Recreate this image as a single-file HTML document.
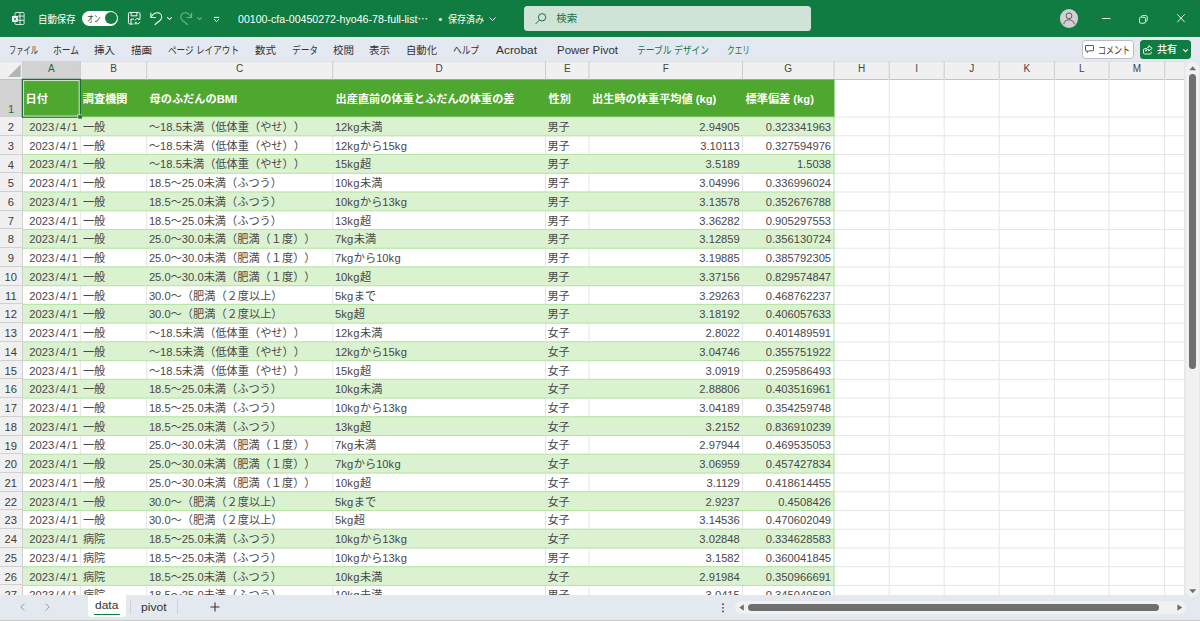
<!DOCTYPE html>
<html lang="ja"><head><meta charset="utf-8"><title>Excel</title>
<style>
*{box-sizing:border-box;margin:0;padding:0}
html,body{width:1200px;height:621px;overflow:hidden;background:#fff}
body{position:relative;text-spacing-trim:space-all;font-family:"Liberation Sans","Noto Sans CJK JP",sans-serif;font-size:11px;color:#444}
i{font-style:normal}
#title{position:absolute;left:0;top:0;width:1200px;height:37px;background:#107c41;color:#fff}
#title .t{position:absolute;white-space:nowrap;font-size:10.5px;line-height:14px;top:11.6px;color:#fff;transform-origin:0 50%}
#title svg{position:absolute;overflow:visible}
#toggle{position:absolute;left:81.7px;top:10.7px;width:36.5px;height:15.2px;border-radius:8px;background:#fff}
#toggle b{position:absolute;left:23.3px;top:1.6px;width:12px;height:12px;border-radius:50%;background:#107c41}
#toggle span{position:absolute;left:5px;top:1.1px;font-size:9.5px;line-height:14px;color:#1f4d33;font-weight:400;white-space:nowrap;transform-origin:0 50%}
#search{position:absolute;left:524px;top:6.2px;width:287px;height:24.8px;border-radius:3.5px;background:#cfe3d7}
#search span{position:absolute;left:32.2px;top:5.3px;font-size:10.5px;line-height:14px;color:#1f6e43}
#avatar{position:absolute;left:1059.5px;top:9.3px;width:18.8px;height:18.8px;border-radius:50%;background:#d2d0ce}
#ribbon{position:absolute;left:0;top:37px;width:1200px;height:24px;background:#e4e8f0}
#ribbon .tab{position:absolute;top:5.5px;font-size:10.5px;line-height:14px;color:#333;white-space:nowrap;transform-origin:0 50%}
#ribbon .tab.g{color:#107c41}
#btnc{position:absolute;left:1081.5px;top:3.4px;width:52px;height:18.2px;border:1px solid #b9bcc2;border-radius:3.5px;background:#fff}
#btns{position:absolute;left:1140px;top:3.4px;width:50.8px;height:18.2px;border-radius:3.5px;background:#107c41}
#btnc span,#btns span{position:absolute;top:1.4px;font-size:10.5px;line-height:14px;white-space:nowrap;transform-origin:0 50%}
#btnc span{left:15px;color:#3c3c3c}
#btns span{left:16.6px;top:1.7px;color:#fff;font-weight:500}
#ribbon svg{position:absolute;overflow:visible}
#colhdr{position:absolute;left:0;top:61px;width:1184px;height:19px;background:linear-gradient(#d9d9d9,#f0f0f0 1.5px);border-bottom:1px solid #c3c5c5}
#colhdr .ch{position:absolute;top:0;height:17.5px;line-height:15.4px;text-align:center;font-size:10px;color:#444}
#colhdr .ch.sel{color:#1e6b3c}
#sheet{position:absolute;left:0;top:0;width:1184px;height:595.3px;overflow:hidden}
.th{position:absolute;top:91px;font-weight:700;color:#fff;font-size:11.2px;line-height:16px;white-space:nowrap}
.tr{position:absolute;left:0;width:835px;height:18.735px}
.tr .c{position:absolute;top:.9px;line-height:19.4px;white-space:nowrap;color:#484848;font-size:11.2px}
.tr .c.r{text-align:right}
#rowhdr{position:absolute;left:0;top:80px;width:22.6px;height:515.3px;background:#f0f0f0;overflow:hidden;border-right:1px solid #d0d0d0}
#rowhdr .rh{position:absolute;left:0;width:21.6px;text-align:center;font-size:11.2px;color:#3c3c3c;border-bottom:1px solid #d0d0d0;margin-top:-80px}
#rowhdr .rh.sel{background:#d2d2d2;color:#1e6b3c;width:22px}
#vscroll{position:absolute;left:1184px;top:61px;width:16px;height:537px;background:#e4e8ef}
#vtrack{position:absolute;left:1.5px;top:.8px;width:13px;height:535.4px;background:#f1f1f1;border-radius:6.5px}
#vthumb{position:absolute;left:5px;top:13px;width:7px;height:294.5px;border-radius:3.5px;background:#6f6f6f}
#bottom{position:absolute;left:0;top:595.3px;width:1200px;height:25.7px;background:#e4e8ef;border-bottom:1.3px solid #c9c9c9}
#bottom svg{position:absolute;overflow:visible}
#tabdata{position:absolute;left:88px;top:0;width:38px;height:22px;background:#fff;border-radius:0 0 4px 4px}
#tabdata span{position:absolute;left:6.5px;top:2.2px;font-size:11.5px;line-height:16px;color:#333}
#tabdata i{position:absolute;left:6px;top:18.3px;width:26px;height:1.5px;background:#107c41}
#tabpivot{position:absolute;left:140.5px;top:3.5px;font-size:11.5px;line-height:16px;color:#333}
.sep{position:absolute;top:4px;width:1px;height:15px;background:#cfd3d9}
#htrack{position:absolute;left:735px;top:5.7px;width:450.5px;height:13px;border-radius:6.5px;background:#f1f1f1}
#hthumb{position:absolute;left:748px;top:8.7px;width:411px;height:7px;border-radius:3.5px;background:#6f6f6f}
.tr .c .sl{padding:0 1.2px}
#grid{position:absolute;left:0;top:0}
.tr .c .kg{letter-spacing:.4px}
#selsvg{position:absolute;left:0;top:0}

</style></head>
<body>
<div id="title">
<svg style="left:12px;top:12px" width="13" height="13" viewBox="0 0 13 13" fill="none" stroke="#fff" stroke-width=".8"><path d="M3 4V1.500c0-.6.400-1 1-1h7.100c.6 0 1 .400 1 1v10c0 .6-.4 1-1 1H4c-.6 0-1-.4-1-1V10"/><path d="M8 .5v12M5.800 4.100h6.300M5.800 8.300h6.300"/><rect x="0" y="4.100" width="5.900" height="5.900" rx=".9" fill="#fff" stroke="none"/><path d="M1.800 5.600l2.300 2.900M4.100 5.600L1.800 8.500" stroke="#107c41" stroke-width=".85"/></svg>
<span class="t" style="transform:scaleX(0.893);left:38px">自動保存</span>
<div id="toggle"><span style="transform:scaleX(0.710)">オン</span><b></b></div>
<svg style="left:128px;top:12px" width="12.500" height="12.500" viewBox="0 0 14 14" fill="none" stroke="#fff" stroke-width="1.100"><path d="M6 13.500H2c-.8 0-1.500-.7-1.500-1.500V2C.5 1.200 1.200.5 2 .5h10c.8 0 1.500.7 1.500 1.500v4.500"/><path d="M3.500.5v3.800h6.500V.5M3.300 13.300V8h3.500"/><path d="M8 9.500a3 3 0 0 1 5.200-1.200M13.300 6.400v2h-2M13.400 11a3 3 0 0 1-5.200 1.200M8 14v-2h2" stroke-width="1"/></svg>
<svg style="left:150px;top:11px" width="13" height="15" viewBox="0 0 13 15" fill="none" stroke="#fff" stroke-width="1.100"><path d="M.9 1.700V6.500H5.800"/><path d="M1.200 6.300C2.500 3.600 5 1.800 7.500 1.800c2.500 0 4.200 2 4.200 4.200 0 1.500-.7 2.600-1.700 3.500L4.700 13.700"/></svg>
<svg style="left:167.200px;top:16.800px" width="5" height="3.200" viewBox="0 0 5 3.200" fill="none" stroke="#fff" stroke-width="1.100"><path d="M.3.400L2.500 2.600 4.700.4"/></svg>
<svg style="left:180px;top:11px;opacity:.4" width="13" height="15" viewBox="0 0 13 15" fill="none" stroke="#fff" stroke-width="1.100"><path d="M11.600 1.700V6.500H6.700"/><path d="M11.300 6.300C10 3.600 7.500 1.800 5 1.800 2.500 1.800.8 3.800.8 6c0 1.500.7 2.600 1.700 3.500l5.300 4.200"/></svg>
<svg style="left:197px;top:16.800px;opacity:.4" width="5" height="3.200" viewBox="0 0 5 3.200" fill="none" stroke="#fff" stroke-width="1.100"><path d="M.3.400L2.500 2.600 4.700.4"/></svg>
<svg style="left:212.500px;top:15.500px" width="7" height="6" viewBox="0 0 7 6" fill="none" stroke="#fff" stroke-width="1"><path d="M.8 1.400h5.400M1 3.200l2.500 2.400L6 3.200"/></svg>
<span class="t" style="transform:scaleX(1.011);left:238px">00100-cfa-00450272-hyo46-78-full-list<i style="font-family:'Noto Sans CJK JP',sans-serif">…</i></span>
<span class="t" style="left:438.500px">•</span><span class="t" style="transform:scaleX(0.857);left:447.500px">保存済み</span>
<svg style="left:488.500px;top:16.500px" width="7" height="4.500" viewBox="0 0 7 4.500" fill="none" stroke="#fff" stroke-width="1"><path d="M.5.500l3 3 3-3"/></svg>
<div id="search"><svg style="left:10.500px;top:6.500px" width="12" height="12" viewBox="0 0 12 12" fill="none" stroke="#1f6e43" stroke-width="1"><circle cx="7.100" cy="4.300" r="3.700"/><path d="M4.500 7L.6 11"/></svg><span>検索</span></div>
<div id="avatar"><svg style="left:3.400px;top:3px" width="12" height="13" viewBox="0 0 12 13" fill="none" stroke="#605e5c" stroke-width="1"><circle cx="6" cy="3.800" r="2.900"/><path d="M.8 12.300C1 9.300 3 7.800 6 7.800s5 1.500 5.200 4.500"/></svg></div>
<svg style="left:1101.700px;top:17.800px" width="8.500" height="1.200" viewBox="0 0 8.500 1.200"><rect width="8.500" height=".9" fill="#fff"/></svg>
<svg style="left:1139px;top:14.500px" width="8.700" height="8.700" viewBox="0 0 9 9" fill="none" stroke="#fff" stroke-width=".9"><rect x=".5" y="2.300" width="6.200" height="6.200" rx="1.400"/><path d="M2.500 2V1.700C2.500 1 3 .5 3.700.5H7c.8 0 1.500.7 1.500 1.500v3.300c0 .7-.5 1.200-1.200 1.200H7"/></svg>
<svg style="left:1176.800px;top:14.300px" width="8" height="8.500" viewBox="0 0 8 8.500" fill="none" stroke="#fff" stroke-width=".9"><path d="M.3.300l7.400 7.900M7.700.3L.3 8.200"/></svg>
</div>
<div id="ribbon">
<span class="tab" style="transform:scaleX(0.690);left:9px">ファイル</span>
<span class="tab" style="transform:scaleX(0.834);left:53px">ホーム</span>
<span class="tab" style="transform:scaleX(1.000);left:94px">挿入</span>
<span class="tab" style="transform:scaleX(1.000);left:131px">描画</span>
<span class="tab" style="transform:scaleX(0.819);left:168px">ページ レイアウト</span>
<span class="tab" style="transform:scaleX(1.000);left:255px">数式</span>
<span class="tab" style="transform:scaleX(0.825);left:292px">データ</span>
<span class="tab" style="transform:scaleX(1.000);left:333px">校閲</span>
<span class="tab" style="transform:scaleX(1.000);left:369px">表示</span>
<span class="tab" style="transform:scaleX(0.984);left:406px">自動化</span>
<span class="tab" style="transform:scaleX(0.825);left:453px">ヘルプ</span>
<span class="tab" style="transform:scaleX(1.133);left:496px">Acrobat</span>
<span class="tab" style="transform:scaleX(1.089);left:557px">Power Pivot</span>
<span class="tab g" style="transform:scaleX(0.834);left:637px">テーブル デザイン</span>
<span class="tab g" style="transform:scaleX(0.730);left:726.500px">クエリ</span>
<div id="btnc"><svg style="left:2.500px;top:3.700px" width="9" height="8.500" viewBox="0 0 9 8.500" fill="none" stroke="#444" stroke-width=".9"><path d="M1 .5h7c.3 0 .5.200.5.500v4.300c0 .3-.2.500-.5.500H3.800L2.200 7.600V5.800H1c-.3 0-.5-.2-.5-.5V1C.5.700.7.500 1 .500z"/></svg><span style="transform:scaleX(0.762)">コメント</span></div>
<div id="btns"><svg style="left:3px;top:4.300px" width="10" height="9.500" viewBox="0 0 10 9.500" fill="none" stroke="#fff" stroke-width=".9"><path d="M3.300 3.600H1.600C1 3.600.5 4.100.5 4.700v3.200C.5 8.500 1 9 1.600 9h5.600c.6 0 1.100-.5 1.100-1.100V6.800"/><path d="M5.800.6l3.400 2.700-3.400 2.600V4.400C4.300 4.400 3.300 5 2.600 6.200 2.800 3.800 4 2.400 5.800 2.200z"/></svg><span style="transform:scaleX(0.952)">共有</span><svg style="left:42.800px;top:8.400px" width="5" height="3.500" viewBox="0 0 5 3.500" fill="none" stroke="#fff" stroke-width="1.100"><path d="M.3.400l2.200 2.300L4.700.4"/></svg></div>
</div>
<div id="colhdr">
<svg width="1184" height="18.500" viewBox="0 0 1184 18.500" style="position:absolute;left:0;top:0"><path d="M20.700 3.500v12.400H8z" fill="#b5b5b5"/><rect x="21.8" y="0" width="58.9" height="18.500" fill="#d2d2d2"/><path d="M80.4 .5V18.500M146.7 .5V18.500M332.75 .5V18.500M545.5 .5V18.500M589.0 .5V18.500M742.5 .5V18.500M834.0 .5V18.500M889.2 .5V18.500M944.2 .5V18.500M999.2 .5V18.500M1054.4 .5V18.500M1109.1 .5V18.500M1164.7 .5V18.500" stroke="#cdcdcd" stroke-width="1" fill="none"/></svg>
<div class="ch sel" style="left:22.30px;width:58.10px">A</div><div class="ch" style="left:80.40px;width:66.30px">B</div><div class="ch" style="left:146.70px;width:186.05px">C</div><div class="ch" style="left:332.75px;width:212.75px">D</div><div class="ch" style="left:545.50px;width:43.50px">E</div><div class="ch" style="left:589.00px;width:153.50px">F</div><div class="ch" style="left:742.50px;width:91.50px">G</div><div class="ch" style="left:834.00px;width:55.20px">H</div><div class="ch" style="left:889.20px;width:55.00px">I</div><div class="ch" style="left:944.20px;width:55.00px">J</div><div class="ch" style="left:999.20px;width:55.20px">K</div><div class="ch" style="left:1054.40px;width:54.70px">L</div><div class="ch" style="left:1109.10px;width:55.60px">M</div>
</div>
<div id="sheet">
<svg id="grid" width="1184" height="596" viewBox="0 0 1184 596"><path d="M80.4 79V596M146.7 79V596M332.75 79V596M545.5 79V596M589.0 79V596M742.5 79V596M889.2 79V596M944.2 79V596M999.2 79V596M1054.4 79V596M1109.1 79V596M1164.7 79V596M22 117.05H1184M22 135.78H1184M22 154.52H1184M22 173.25H1184M22 191.99H1184M22 210.72H1184M22 229.46H1184M22 248.19H1184M22 266.93H1184M22 285.67H1184M22 304.40H1184M22 323.13H1184M22 341.87H1184M22 360.61H1184M22 379.34H1184M22 398.07H1184M22 416.81H1184M22 435.55H1184M22 454.28H1184M22 473.01H1184M22 491.75H1184M22 510.49H1184M22 529.22H1184M22 547.95H1184M22 566.69H1184M22 585.42H1184" stroke="#e6e6e6" stroke-width="1" fill="none"/><rect x="22.5" y="79.5" width="812.0" height="37.85" fill="#4ea72e"/><path d="M22.5 117.05h812.0v18.735h-812.0zM22.5 154.52h812.0v18.735h-812.0zM22.5 191.99h812.0v18.735h-812.0zM22.5 229.46h812.0v18.735h-812.0zM22.5 266.93h812.0v18.735h-812.0zM22.5 304.40h812.0v18.735h-812.0zM22.5 341.87h812.0v18.735h-812.0zM22.5 379.34h812.0v18.735h-812.0zM22.5 416.81h812.0v18.735h-812.0zM22.5 454.28h812.0v18.735h-812.0zM22.5 491.75h812.0v18.735h-812.0zM22.5 529.22h812.0v18.735h-812.0zM22.5 566.69h812.0v18.735h-812.0z" fill="#daf2d0"/><path d="M22.5 117.05H834.5M22.5 135.78H834.5M22.5 154.52H834.5M22.5 173.25H834.5M22.5 191.99H834.5M22.5 210.72H834.5M22.5 229.46H834.5M22.5 248.19H834.5M22.5 266.93H834.5M22.5 285.67H834.5M22.5 304.40H834.5M22.5 323.13H834.5M22.5 341.87H834.5M22.5 360.61H834.5M22.5 379.34H834.5M22.5 398.07H834.5M22.5 416.81H834.5M22.5 435.55H834.5M22.5 454.28H834.5M22.5 473.01H834.5M22.5 491.75H834.5M22.5 510.49H834.5M22.5 529.22H834.5M22.5 547.95H834.5M22.5 566.69H834.5M22.5 585.42H834.5M22.5 604.16H834.5M834.0 117.05V596" stroke="#b6e5a3" stroke-width="1" fill="none"/></svg>
<span class="th" style="left:25.6px">日付</span><span class="th" style="left:82.8px">調査機関</span><span class="th" style="left:149.5px">母のふだんのBMI</span><span class="th" style="left:335.5px">出産直前の体重とふだんの体重の差</span><span class="th" style="left:548.5px">性別</span><span class="th" style="left:592.0px">出生時の体重平均値 (kg)</span><span class="th" style="left:745.5px">標準偏差 (kg)</span>
<div class="tr" style="top:117.05px"><span class="c r" style="left:22.3px;width:55.400000000000006px">2023<i class="sl">/</i>4<i class="sl">/</i>1</span><span class="c" style="left:82.9px">一般</span><span class="c" style="left:148.9px">～18.5未満（低体重（やせ））</span><span class="c" style="left:334.9px">12<i class="kg">kg</i>未満</span><span class="c" style="left:547.4px">男子</span><span class="c r" style="left:589.5px;width:150.3px">2.94905</span><span class="c r" style="left:743px;width:88.1px">0.323341963</span></div>
<div class="tr" style="top:135.78px"><span class="c r" style="left:22.3px;width:55.400000000000006px">2023<i class="sl">/</i>4<i class="sl">/</i>1</span><span class="c" style="left:82.9px">一般</span><span class="c" style="left:148.9px">～18.5未満（低体重（やせ））</span><span class="c" style="left:334.9px">12<i class="kg">kg</i>から15<i class="kg">kg</i></span><span class="c" style="left:547.4px">男子</span><span class="c r" style="left:589.5px;width:150.3px">3.10113</span><span class="c r" style="left:743px;width:88.1px">0.327594976</span></div>
<div class="tr" style="top:154.52px"><span class="c r" style="left:22.3px;width:55.400000000000006px">2023<i class="sl">/</i>4<i class="sl">/</i>1</span><span class="c" style="left:82.9px">一般</span><span class="c" style="left:148.9px">～18.5未満（低体重（やせ））</span><span class="c" style="left:334.9px">15<i class="kg">kg</i>超</span><span class="c" style="left:547.4px">男子</span><span class="c r" style="left:589.5px;width:150.3px">3.5189</span><span class="c r" style="left:743px;width:88.1px">1.5038</span></div>
<div class="tr" style="top:173.25px"><span class="c r" style="left:22.3px;width:55.400000000000006px">2023<i class="sl">/</i>4<i class="sl">/</i>1</span><span class="c" style="left:82.9px">一般</span><span class="c" style="left:148.9px">18.5～25.0未満（ふつう）</span><span class="c" style="left:334.9px">10<i class="kg">kg</i>未満</span><span class="c" style="left:547.4px">男子</span><span class="c r" style="left:589.5px;width:150.3px">3.04996</span><span class="c r" style="left:743px;width:88.1px">0.336996024</span></div>
<div class="tr" style="top:191.99px"><span class="c r" style="left:22.3px;width:55.400000000000006px">2023<i class="sl">/</i>4<i class="sl">/</i>1</span><span class="c" style="left:82.9px">一般</span><span class="c" style="left:148.9px">18.5～25.0未満（ふつう）</span><span class="c" style="left:334.9px">10<i class="kg">kg</i>から13<i class="kg">kg</i></span><span class="c" style="left:547.4px">男子</span><span class="c r" style="left:589.5px;width:150.3px">3.13578</span><span class="c r" style="left:743px;width:88.1px">0.352676788</span></div>
<div class="tr" style="top:210.72px"><span class="c r" style="left:22.3px;width:55.400000000000006px">2023<i class="sl">/</i>4<i class="sl">/</i>1</span><span class="c" style="left:82.9px">一般</span><span class="c" style="left:148.9px">18.5～25.0未満（ふつう）</span><span class="c" style="left:334.9px">13<i class="kg">kg</i>超</span><span class="c" style="left:547.4px">男子</span><span class="c r" style="left:589.5px;width:150.3px">3.36282</span><span class="c r" style="left:743px;width:88.1px">0.905297553</span></div>
<div class="tr" style="top:229.46px"><span class="c r" style="left:22.3px;width:55.400000000000006px">2023<i class="sl">/</i>4<i class="sl">/</i>1</span><span class="c" style="left:82.9px">一般</span><span class="c" style="left:148.9px">25.0～30.0未満（肥満（１度））</span><span class="c" style="left:334.9px">7<i class="kg">kg</i>未満</span><span class="c" style="left:547.4px">男子</span><span class="c r" style="left:589.5px;width:150.3px">3.12859</span><span class="c r" style="left:743px;width:88.1px">0.356130724</span></div>
<div class="tr" style="top:248.19px"><span class="c r" style="left:22.3px;width:55.400000000000006px">2023<i class="sl">/</i>4<i class="sl">/</i>1</span><span class="c" style="left:82.9px">一般</span><span class="c" style="left:148.9px">25.0～30.0未満（肥満（１度））</span><span class="c" style="left:334.9px">7<i class="kg">kg</i>から10<i class="kg">kg</i></span><span class="c" style="left:547.4px">男子</span><span class="c r" style="left:589.5px;width:150.3px">3.19885</span><span class="c r" style="left:743px;width:88.1px">0.385792305</span></div>
<div class="tr" style="top:266.93px"><span class="c r" style="left:22.3px;width:55.400000000000006px">2023<i class="sl">/</i>4<i class="sl">/</i>1</span><span class="c" style="left:82.9px">一般</span><span class="c" style="left:148.9px">25.0～30.0未満（肥満（１度））</span><span class="c" style="left:334.9px">10<i class="kg">kg</i>超</span><span class="c" style="left:547.4px">男子</span><span class="c r" style="left:589.5px;width:150.3px">3.37156</span><span class="c r" style="left:743px;width:88.1px">0.829574847</span></div>
<div class="tr" style="top:285.67px"><span class="c r" style="left:22.3px;width:55.400000000000006px">2023<i class="sl">/</i>4<i class="sl">/</i>1</span><span class="c" style="left:82.9px">一般</span><span class="c" style="left:148.9px">30.0～（肥満（２度以上）</span><span class="c" style="left:334.9px">5<i class="kg">kg</i>まで</span><span class="c" style="left:547.4px">男子</span><span class="c r" style="left:589.5px;width:150.3px">3.29263</span><span class="c r" style="left:743px;width:88.1px">0.468762237</span></div>
<div class="tr" style="top:304.40px"><span class="c r" style="left:22.3px;width:55.400000000000006px">2023<i class="sl">/</i>4<i class="sl">/</i>1</span><span class="c" style="left:82.9px">一般</span><span class="c" style="left:148.9px">30.0～（肥満（２度以上）</span><span class="c" style="left:334.9px">5<i class="kg">kg</i>超</span><span class="c" style="left:547.4px">男子</span><span class="c r" style="left:589.5px;width:150.3px">3.18192</span><span class="c r" style="left:743px;width:88.1px">0.406057633</span></div>
<div class="tr" style="top:323.13px"><span class="c r" style="left:22.3px;width:55.400000000000006px">2023<i class="sl">/</i>4<i class="sl">/</i>1</span><span class="c" style="left:82.9px">一般</span><span class="c" style="left:148.9px">～18.5未満（低体重（やせ））</span><span class="c" style="left:334.9px">12<i class="kg">kg</i>未満</span><span class="c" style="left:547.4px">女子</span><span class="c r" style="left:589.5px;width:150.3px">2.8022</span><span class="c r" style="left:743px;width:88.1px">0.401489591</span></div>
<div class="tr" style="top:341.87px"><span class="c r" style="left:22.3px;width:55.400000000000006px">2023<i class="sl">/</i>4<i class="sl">/</i>1</span><span class="c" style="left:82.9px">一般</span><span class="c" style="left:148.9px">～18.5未満（低体重（やせ））</span><span class="c" style="left:334.9px">12<i class="kg">kg</i>から15<i class="kg">kg</i></span><span class="c" style="left:547.4px">女子</span><span class="c r" style="left:589.5px;width:150.3px">3.04746</span><span class="c r" style="left:743px;width:88.1px">0.355751922</span></div>
<div class="tr" style="top:360.61px"><span class="c r" style="left:22.3px;width:55.400000000000006px">2023<i class="sl">/</i>4<i class="sl">/</i>1</span><span class="c" style="left:82.9px">一般</span><span class="c" style="left:148.9px">～18.5未満（低体重（やせ））</span><span class="c" style="left:334.9px">15<i class="kg">kg</i>超</span><span class="c" style="left:547.4px">女子</span><span class="c r" style="left:589.5px;width:150.3px">3.0919</span><span class="c r" style="left:743px;width:88.1px">0.259586493</span></div>
<div class="tr" style="top:379.34px"><span class="c r" style="left:22.3px;width:55.400000000000006px">2023<i class="sl">/</i>4<i class="sl">/</i>1</span><span class="c" style="left:82.9px">一般</span><span class="c" style="left:148.9px">18.5～25.0未満（ふつう）</span><span class="c" style="left:334.9px">10<i class="kg">kg</i>未満</span><span class="c" style="left:547.4px">女子</span><span class="c r" style="left:589.5px;width:150.3px">2.88806</span><span class="c r" style="left:743px;width:88.1px">0.403516961</span></div>
<div class="tr" style="top:398.07px"><span class="c r" style="left:22.3px;width:55.400000000000006px">2023<i class="sl">/</i>4<i class="sl">/</i>1</span><span class="c" style="left:82.9px">一般</span><span class="c" style="left:148.9px">18.5～25.0未満（ふつう）</span><span class="c" style="left:334.9px">10<i class="kg">kg</i>から13<i class="kg">kg</i></span><span class="c" style="left:547.4px">女子</span><span class="c r" style="left:589.5px;width:150.3px">3.04189</span><span class="c r" style="left:743px;width:88.1px">0.354259748</span></div>
<div class="tr" style="top:416.81px"><span class="c r" style="left:22.3px;width:55.400000000000006px">2023<i class="sl">/</i>4<i class="sl">/</i>1</span><span class="c" style="left:82.9px">一般</span><span class="c" style="left:148.9px">18.5～25.0未満（ふつう）</span><span class="c" style="left:334.9px">13<i class="kg">kg</i>超</span><span class="c" style="left:547.4px">女子</span><span class="c r" style="left:589.5px;width:150.3px">3.2152</span><span class="c r" style="left:743px;width:88.1px">0.836910239</span></div>
<div class="tr" style="top:435.55px"><span class="c r" style="left:22.3px;width:55.400000000000006px">2023<i class="sl">/</i>4<i class="sl">/</i>1</span><span class="c" style="left:82.9px">一般</span><span class="c" style="left:148.9px">25.0～30.0未満（肥満（１度））</span><span class="c" style="left:334.9px">7<i class="kg">kg</i>未満</span><span class="c" style="left:547.4px">女子</span><span class="c r" style="left:589.5px;width:150.3px">2.97944</span><span class="c r" style="left:743px;width:88.1px">0.469535053</span></div>
<div class="tr" style="top:454.28px"><span class="c r" style="left:22.3px;width:55.400000000000006px">2023<i class="sl">/</i>4<i class="sl">/</i>1</span><span class="c" style="left:82.9px">一般</span><span class="c" style="left:148.9px">25.0～30.0未満（肥満（１度））</span><span class="c" style="left:334.9px">7<i class="kg">kg</i>から10<i class="kg">kg</i></span><span class="c" style="left:547.4px">女子</span><span class="c r" style="left:589.5px;width:150.3px">3.06959</span><span class="c r" style="left:743px;width:88.1px">0.457427834</span></div>
<div class="tr" style="top:473.01px"><span class="c r" style="left:22.3px;width:55.400000000000006px">2023<i class="sl">/</i>4<i class="sl">/</i>1</span><span class="c" style="left:82.9px">一般</span><span class="c" style="left:148.9px">25.0～30.0未満（肥満（１度））</span><span class="c" style="left:334.9px">10<i class="kg">kg</i>超</span><span class="c" style="left:547.4px">女子</span><span class="c r" style="left:589.5px;width:150.3px">3.1129</span><span class="c r" style="left:743px;width:88.1px">0.418614455</span></div>
<div class="tr" style="top:491.75px"><span class="c r" style="left:22.3px;width:55.400000000000006px">2023<i class="sl">/</i>4<i class="sl">/</i>1</span><span class="c" style="left:82.9px">一般</span><span class="c" style="left:148.9px">30.0～（肥満（２度以上）</span><span class="c" style="left:334.9px">5<i class="kg">kg</i>まで</span><span class="c" style="left:547.4px">女子</span><span class="c r" style="left:589.5px;width:150.3px">2.9237</span><span class="c r" style="left:743px;width:88.1px">0.4508426</span></div>
<div class="tr" style="top:510.49px"><span class="c r" style="left:22.3px;width:55.400000000000006px">2023<i class="sl">/</i>4<i class="sl">/</i>1</span><span class="c" style="left:82.9px">一般</span><span class="c" style="left:148.9px">30.0～（肥満（２度以上）</span><span class="c" style="left:334.9px">5<i class="kg">kg</i>超</span><span class="c" style="left:547.4px">女子</span><span class="c r" style="left:589.5px;width:150.3px">3.14536</span><span class="c r" style="left:743px;width:88.1px">0.470602049</span></div>
<div class="tr" style="top:529.22px"><span class="c r" style="left:22.3px;width:55.400000000000006px">2023<i class="sl">/</i>4<i class="sl">/</i>1</span><span class="c" style="left:82.9px">病院</span><span class="c" style="left:148.9px">18.5～25.0未満（ふつう）</span><span class="c" style="left:334.9px">10<i class="kg">kg</i>から13<i class="kg">kg</i></span><span class="c" style="left:547.4px">女子</span><span class="c r" style="left:589.5px;width:150.3px">3.02848</span><span class="c r" style="left:743px;width:88.1px">0.334628583</span></div>
<div class="tr" style="top:547.95px"><span class="c r" style="left:22.3px;width:55.400000000000006px">2023<i class="sl">/</i>4<i class="sl">/</i>1</span><span class="c" style="left:82.9px">病院</span><span class="c" style="left:148.9px">18.5～25.0未満（ふつう）</span><span class="c" style="left:334.9px">10<i class="kg">kg</i>から13<i class="kg">kg</i></span><span class="c" style="left:547.4px">男子</span><span class="c r" style="left:589.5px;width:150.3px">3.1582</span><span class="c r" style="left:743px;width:88.1px">0.360041845</span></div>
<div class="tr" style="top:566.69px"><span class="c r" style="left:22.3px;width:55.400000000000006px">2023<i class="sl">/</i>4<i class="sl">/</i>1</span><span class="c" style="left:82.9px">病院</span><span class="c" style="left:148.9px">18.5～25.0未満（ふつう）</span><span class="c" style="left:334.9px">10<i class="kg">kg</i>未満</span><span class="c" style="left:547.4px">女子</span><span class="c r" style="left:589.5px;width:150.3px">2.91984</span><span class="c r" style="left:743px;width:88.1px">0.350966691</span></div>
<div class="tr" style="top:585.42px"><span class="c r" style="left:22.3px;width:55.400000000000006px">2023<i class="sl">/</i>4<i class="sl">/</i>1</span><span class="c" style="left:82.9px">病院</span><span class="c" style="left:148.9px">18.5～25.0未満（ふつう）</span><span class="c" style="left:334.9px">10<i class="kg">kg</i>未満</span><span class="c" style="left:547.4px">男子</span><span class="c r" style="left:589.5px;width:150.3px">3.0415</span><span class="c r" style="left:743px;width:88.1px">0.345049589</span></div>
</div>
<div id="rowhdr">
<div class="rh sel" style="top:80px;height:37.05px"><span style="position:absolute;bottom:1px;left:0;right:0">1</span></div>
<div class="rh" style="top:117.05px;height:18.735px;line-height:21.13px">2</div><div class="rh" style="top:135.78px;height:18.735px;line-height:21.13px">3</div><div class="rh" style="top:154.52px;height:18.735px;line-height:21.13px">4</div><div class="rh" style="top:173.25px;height:18.735px;line-height:21.13px">5</div><div class="rh" style="top:191.99px;height:18.735px;line-height:21.13px">6</div><div class="rh" style="top:210.72px;height:18.735px;line-height:21.13px">7</div><div class="rh" style="top:229.46px;height:18.735px;line-height:21.13px">8</div><div class="rh" style="top:248.19px;height:18.735px;line-height:21.13px">9</div><div class="rh" style="top:266.93px;height:18.735px;line-height:21.13px">10</div><div class="rh" style="top:285.67px;height:18.735px;line-height:21.13px">11</div><div class="rh" style="top:304.40px;height:18.735px;line-height:21.13px">12</div><div class="rh" style="top:323.13px;height:18.735px;line-height:21.13px">13</div><div class="rh" style="top:341.87px;height:18.735px;line-height:21.13px">14</div><div class="rh" style="top:360.61px;height:18.735px;line-height:21.13px">15</div><div class="rh" style="top:379.34px;height:18.735px;line-height:21.13px">16</div><div class="rh" style="top:398.07px;height:18.735px;line-height:21.13px">17</div><div class="rh" style="top:416.81px;height:18.735px;line-height:21.13px">18</div><div class="rh" style="top:435.55px;height:18.735px;line-height:21.13px">19</div><div class="rh" style="top:454.28px;height:18.735px;line-height:21.13px">20</div><div class="rh" style="top:473.01px;height:18.735px;line-height:21.13px">21</div><div class="rh" style="top:491.75px;height:18.735px;line-height:21.13px">22</div><div class="rh" style="top:510.49px;height:18.735px;line-height:21.13px">23</div><div class="rh" style="top:529.22px;height:18.735px;line-height:21.13px">24</div><div class="rh" style="top:547.95px;height:18.735px;line-height:21.13px">25</div><div class="rh" style="top:566.69px;height:18.735px;line-height:21.13px">26</div><div class="rh" style="top:585.42px;height:18.735px;line-height:21.13px">27</div>
</div>
<svg id="selsvg" width="90" height="125" viewBox="0 0 90 125"><rect x="22.4" y="79.4" width="57.95" height="37.75" fill="none" stroke="#1e6b3c" stroke-width="1.3"/><rect x="23.55" y="80.55" width="55.65" height="35.45" fill="none" stroke="#fff" stroke-opacity=".72" stroke-width="1"/><rect x="77.500" y="114.500" width="4.400" height="4.100" fill="#e3f4dc"/><rect x="78.200" y="115.200" width="3.700" height="3.400" fill="#1e6b3c"/></svg>
<div id="bottom">
<svg style="left:19.500px;top:7.500px" width="5" height="8" viewBox="0 0 5 8" fill="none" stroke="#9a9a9a" stroke-width="1"><path d="M4.300.5L.8 4l3.500 3.500"/></svg>
<svg style="left:44.500px;top:7.500px" width="5" height="8" viewBox="0 0 5 8" fill="none" stroke="#9a9a9a" stroke-width="1"><path d="M.7.500L4.200 4 .7 7.500"/></svg>
<div id="tabdata"><span style="transform:scaleX(1.041);transform-origin:0 50%">data</span><i></i></div>
<div class="sep" style="left:129.500px"></div>
<span id="tabpivot" style="transform:scaleX(1.058);transform-origin:0 50%">pivot</span>
<div class="sep" style="left:177px"></div>
<svg style="left:210px;top:6.500px" width="10" height="10" viewBox="0 0 10 10" fill="none" stroke="#333" stroke-width="1.100"><path d="M5 .5v9M.5 5h9"/></svg>
<svg style="left:721.500px;top:8px" width="2" height="10" viewBox="0 0 2 10" fill="#333"><circle cx="1" cy="1.200" r=".85"/><circle cx="1" cy="4.800" r=".85"/><circle cx="1" cy="8.400" r=".85"/></svg>
<div id="htrack"></div>
<svg style="left:739px;top:8.700px" width="5" height="7" viewBox="0 0 5 7"><path d="M.3 3.500L4.800.2v6.600z" fill="#6f6f6f"/></svg>
<div id="hthumb"></div>
<svg style="left:1176.500px;top:8.700px" width="5.500" height="7" viewBox="0 0 5.500 7"><path d="M5.300 3.500L.4.200v6.600z" fill="#6f6f6f"/></svg>
</div>
<div id="vscroll"><div id="vtrack"></div><svg style="position:absolute;left:4.800px;top:5px" width="7.500" height="4.500" viewBox="0 0 7.500 4.500"><path d="M3.750.3L7.300 4.300H.2z" fill="#6f6f6f"/></svg><div id="vthumb"></div><svg style="position:absolute;left:4.800px;top:527.500px" width="7.500" height="4.500" viewBox="0 0 7.500 4.500"><path d="M3.750 4.200L7.300.2H.2z" fill="#6f6f6f"/></svg></div>
</body></html>
